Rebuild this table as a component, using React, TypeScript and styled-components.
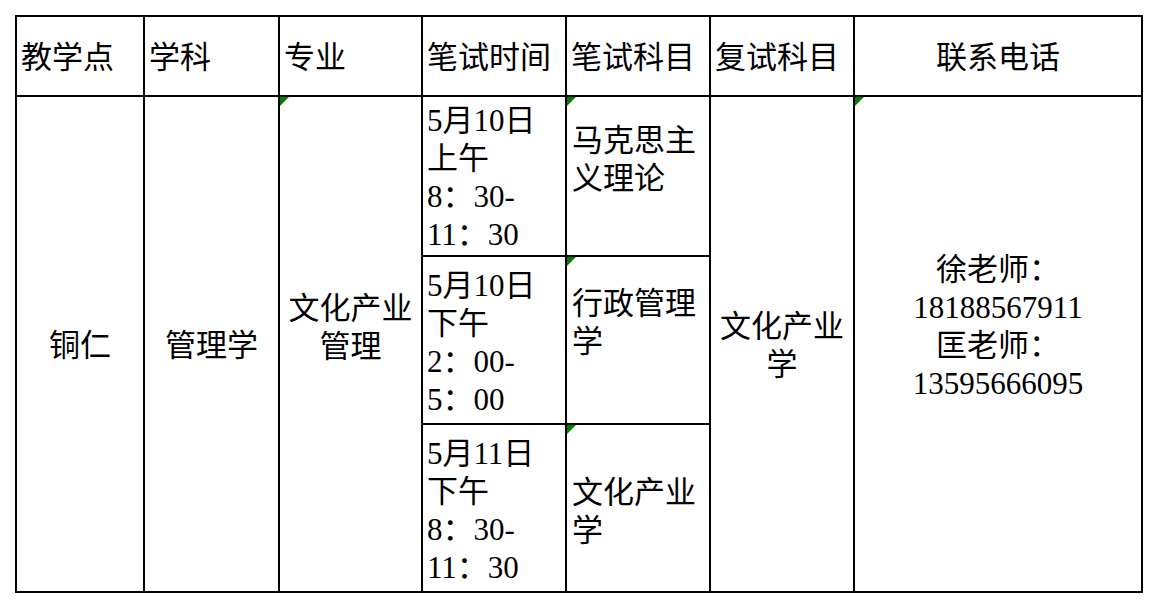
import React from "react";
import styled, { createGlobalStyle, css } from "styled-components";

const GlobalStyle = createGlobalStyle`
  html, body {
    margin: 0;
    padding: 0;
    background: #fff;
  }
  body {
    font-family: "Liberation Serif", "Noto Sans CJK SC", serif;
    color: #000;
  }
`;

interface ColProps {
  $w: number;
}

interface RowProps {
  $h: number;
}

interface CellProps {
  $align?: "left" | "center";
  $top?: number;
  $left?: number;
  $lift?: number;
  $flag?: boolean;
}

const widths = [128, 135, 143, 144, 144, 144, 288];

const exams = [
  {
    time: ["5月10日", "上午", "8：30-", "11：30"],
    timeTop: 5,
    subject: ["马克思主", "义理论"],
    subjectTop: 25,
    h: 160,
  },
  {
    time: ["5月10日", "下午", "2：00-", "5：00"],
    timeTop: 10,
    subject: ["行政管理", "学"],
    subjectTop: 28,
    h: 168,
  },
  {
    time: ["5月11日", "下午", "8：30-", "11：30"],
    timeTop: 10,
    subject: ["文化产业", "学"],
    subjectTop: 49,
    h: 168,
  },
];

function Lines({ items }: { items: string[] }) {
  return (
    <>
      {items.map((t, i) => (
        <React.Fragment key={i}>
          {i > 0 && <br />}
          {t}
        </React.Fragment>
      ))}
    </>
  );
}

function App() {
  return (
    <Page>
      <GlobalStyle />
      <Sheet>
        <colgroup>
          {widths.map((w, i) => (
            <Col key={i} $w={w} />
          ))}
        </colgroup>
        <tbody>
          <Row $h={80}>
            <Head>教学点</Head>
            <Head>学科</Head>
            <Head>专业</Head>
            <Head>笔试时间</Head>
            <Head>笔试科目</Head>
            <Head>复试科目</Head>
            <Head $align="center">联系电话</Head>
          </Row>
          {exams.map((e, i) => (
            <Row key={i} $h={e.h}>
              {i === 0 && (
                <>
                  <Cell rowSpan={3} $align="center">
                    铜仁
                  </Cell>
                  <Cell rowSpan={3} $align="center">
                    管理学
                  </Cell>
                  <Cell rowSpan={3} $align="center" $lift={36} $flag>
                    文化产业
                    <br />
                    管理
                  </Cell>
                </>
              )}
              <Cell $top={e.timeTop} $left={4}>
                <Lines items={e.time} />
              </Cell>
              <Cell $top={e.subjectTop} $left={5} $flag>
                <Lines items={e.subject} />
              </Cell>
              {i === 0 && (
                <>
                  <Cell rowSpan={3} $align="center">
                    文化产业
                    <br />
                    学
                  </Cell>
                  <Cell rowSpan={3} $align="center" $lift={38} $flag>
                    徐老师：
                    <br />
                    18188567911
                    <br />
                    匡老师：
                    <br />
                    13595666095
                  </Cell>
                </>
              )}
            </Row>
          ))}
        </tbody>
      </Sheet>
    </Page>
  );
}

const Page = styled.div`
  padding: 15px 0 0 15px;
`;

const Sheet = styled.table`
  border-collapse: collapse;
  table-layout: fixed;
  width: 1128px;
  font-size: 31px;
  line-height: 38px;
`;

const Col = styled.col<ColProps>`
  width: ${(p) => p.$w}px;
`;

const Row = styled.tr<RowProps>`
  height: ${(p) => p.$h}px;
`;

const Head = styled.td<CellProps>`
  border: 2px solid #000;
  padding: 4px 4px 0 4px;
  vertical-align: middle;
  text-align: ${(p) => p.$align || "left"};
  white-space: nowrap;
`;

const Cell = styled.td<CellProps>`
  position: relative;
  border: 2px solid #000;
  padding: ${(p) =>
    p.$top !== undefined
      ? `${p.$top}px 4px 0 ${p.$left ?? 4}px`
      : `4px 4px ${p.$lift || 0}px 4px`};
  vertical-align: ${(p) => (p.$top !== undefined ? "top" : "middle")};
  text-align: ${(p) => p.$align || "left"};
  white-space: nowrap;

  ${(p) =>
    p.$flag &&
    css`
      &::before {
        content: "";
        position: absolute;
        left: 0;
        top: 0;
        width: 0;
        height: 0;
        border-top: 9px solid #008000;
        border-right: 9px solid transparent;
      }
    `}
`;

export default App;
